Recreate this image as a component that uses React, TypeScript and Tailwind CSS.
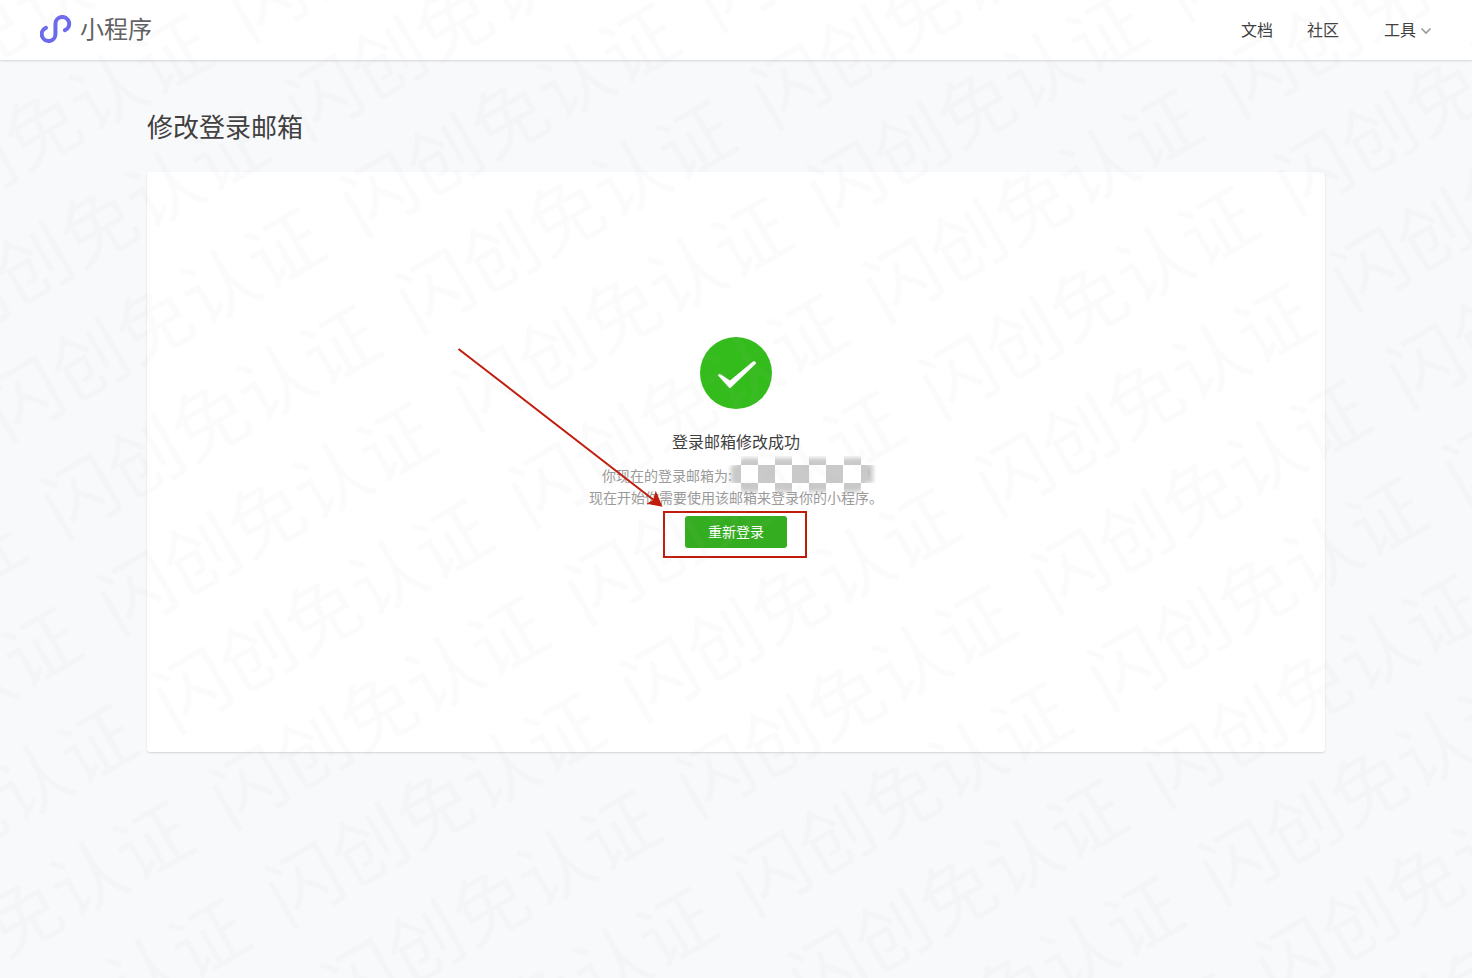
const navItems = [
  { label: '文档', className: 'mr-[34px]' },
  { label: '社区', className: 'mr-[45px]' },
];

const mosaicColumns = [13, 47, 81, 116];

function Watermark() {
  return (
    <svg className="pointer-events-none absolute inset-0 z-20 h-full w-full" aria-hidden="true">
      <defs>
        <pattern
          id="watermark"
          width="410"
          height="112"
          patternUnits="userSpaceOnUse"
          patternTransform="rotate(-30) translate(188 76)"
        >
          <text x="6" y="85" fontSize="75" fill="#bbbbbb" fillOpacity="0.05">
            闪创免认证
          </text>
        </pattern>
      </defs>
      <rect width="100%" height="100%" fill="url(#watermark)" />
    </svg>
  );
}

function Logo() {
  return (
    <svg width="32" height="30" viewBox="0 0 32 30" fill="none" aria-hidden="true">
      <path
        d="M25 15.1A6.85 6.85 0 1 0 15.450 8.8V19.2A6.85 6.85 0 1 1 5.900 12.900"
        stroke="#6b69ee"
        strokeWidth="4"
        strokeLinecap="round"
      />
    </svg>
  );
}

function Header() {
  return (
    <header className="relative z-10 flex h-15 items-center justify-between bg-white px-10 shadow-[0_1px_2px_rgba(0,0,0,0.15)]">
      <a href="#home" className="flex items-center gap-2">
        <Logo />
        <span className="pb-1 text-2xl leading-8 text-[#626262]">小程序</span>
      </a>
      <nav className="flex items-center pb-0.5 text-base leading-6 text-[#404040]">
        {navItems.map((item) => (
          <a key={item.label} href={`#${item.label}`} className={item.className}>
            {item.label}
          </a>
        ))}
        <button type="button" className="flex items-center gap-1">
          工具
          <svg className="mt-1" width="12" height="8" viewBox="0 0 12 8" fill="none" aria-hidden="true">
            <path d="M1.500 1.500L6 6L10.500 1.500" stroke="#9a9a9a" strokeWidth="1.6" />
          </svg>
        </button>
      </nav>
    </header>
  );
}

function MaskedEmail() {
  return (
    <svg
      className="-my-2 -mr-1.5 -ml-1 shrink-0"
      width="148"
      height="38"
      viewBox="0 0 148 38"
      role="img"
      aria-label="邮箱已隐藏"
    >
      <defs>
        <filter id="soften" x="-10%" y="-20%" width="120%" height="140%">
          <feGaussianBlur stdDeviation="2" />
        </filter>
        <filter id="edge">
          <feGaussianBlur stdDeviation="0.5" />
        </filter>
        <mask id="fade">
          <path d="M8 9L14 2H134L140 8H145V27H138L132 36H14L8 28H3V9Z" fill="#fff" filter="url(#soften)" />
        </mask>
      </defs>
      <g mask="url(#fade)">
        <rect width="148" height="38" fill="#ffffff" />
        <g fill="#c9c9c9" filter="url(#edge)">
          {mosaicColumns.map((x) => (
            <g key={x}>
              <rect x={x} y="0" width="17" height="9" />
              <rect x={x} y="27" width="17" height="11" />
              <rect x={x + 17} y="9" width="17" height="18" />
            </g>
          ))}
          <rect x="0" y="9" width="13" height="18" />
        </g>
        <path d="M141 14V20" stroke="#b5b5b5" />
      </g>
    </svg>
  );
}

function Callout() {
  return (
    <div className="pointer-events-none absolute -top-[5px] -right-5 -bottom-[10px] -left-[22px] border-2 border-[#c01c0c]">
      <svg
        className="absolute right-full bottom-full mr-0.5 mb-0.5"
        width="206"
        height="165"
        viewBox="0 0 206 165"
        fill="none"
        aria-hidden="true"
      >
        <path d="M1.500 3L198 155" stroke="#c01c0c" strokeWidth="2" />
        <path d="M205.500 160.700L189.500 157.700L196.300 154L198.700 144.700Z" fill="#c01c0c" />
      </svg>
    </div>
  );
}

export default function App() {
  return (
    <div className="relative min-h-screen overflow-hidden bg-[#f8f9fb] font-['Noto_Sans_CJK_SC',sans-serif]">
      <Header />
      <main className="mx-auto max-w-[1178px] pt-12">
        <h1 className="text-[26px] leading-9 font-normal text-[#404040]">修改登录邮箱</h1>
        <section className="mt-7 flex flex-col items-center rounded-[3px] bg-white pt-[165px] pb-[204px] shadow-[0_1px_2px_rgba(0,0,0,0.15)]">
          <svg width="72" height="72" viewBox="0 0 72 72" aria-hidden="true">
            <circle cx="36" cy="36" r="36" fill="#34bc1c" />
            <path
              d="M18 38.500Q18.500 36 21 37.500L30 43.500L53 24.500Q56 23.500 56 26.500L31 50.500Q30 51.500 29 50.500Z"
              fill="#fff"
            />
          </svg>
          <h2 className="mt-5 text-base leading-6 font-normal text-[#404040]">登录邮箱修改成功</h2>
          <div className="mt-[11px] text-sm leading-[22px] text-[#9a9a9a]">
            <p className="flex h-[22px] items-center justify-center">
              你现在的登录邮箱为:
              <MaskedEmail />
            </p>
            <p>现在开始你需要使用该邮箱来登录你的小程序。</p>
          </div>
          <div className="relative mt-2">
            <button type="button" className="block h-8 w-[102px] rounded-[3px] bg-[#35ad20] pb-0.5 text-sm text-white">
              重新登录
            </button>
            <Callout />
          </div>
        </section>
      </main>
      <Watermark />
    </div>
  );
}
